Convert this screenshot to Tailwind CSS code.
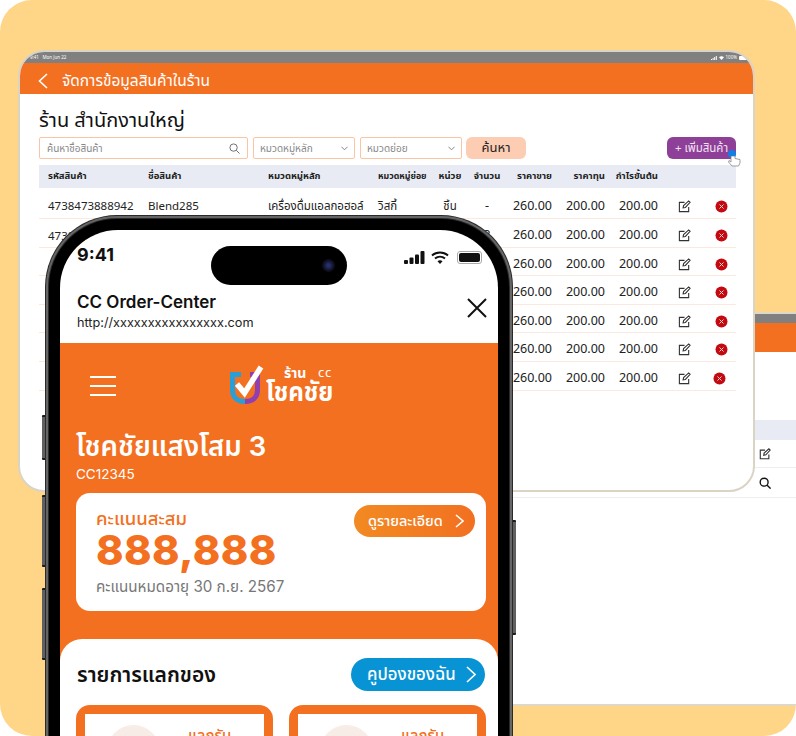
<!DOCTYPE html>
<html lang="th">
<head>
<meta charset="utf-8">
<script src="https://cdn.jsdelivr.net/npm/@tailwindcss/browser@4"></script>
</head>
<body class="bg-white">
<div class="relative w-[796px] h-[736px] overflow-hidden rounded-[32px] bg-[#ffd587] font-['Noto_Sans','Noto_Sans_Thai','Noto_Sans_Thai_Looped',sans-serif] text-[#222]">

  <!-- rear tablet -->
  <div class="absolute left-[440px] top-[312px] w-[420px] h-[394px] border-y-2 border-[#e0d8c6] bg-white flex flex-col">
    <div class="h-[9px] bg-[#808080]"></div>
    <div class="h-[29px] bg-[#f37021]"></div>
    <div class="mt-[68px] h-[20px] bg-[#e8ebf3]"></div>
    <div class="h-[28px] border-b border-[#eee] pl-[319px] flex items-center">
      <svg class="w-[12px] h-[12px]" viewBox="0 0 14 14" fill="none" stroke="#333" stroke-width="1.3"><path d="M11.5 7.5V12.5H1.5V2.5H7"/><path d="M5.5 8.5L6 6L11.5 1L13 2.5L8 8Z"/></svg>
    </div>
    <div class="h-[30px] border-b border-[#eee] pl-[319px] flex items-center">
      <svg class="w-[12px] h-[12px]" viewBox="0 0 14 14" fill="none" stroke="#111" stroke-width="1.6"><circle cx="6" cy="6" r="4.6"/><path d="M9.5 9.5L13.5 13.5"/></svg>
    </div>
  </div>

  <!-- front tablet -->
  <div class="absolute left-[18px] top-[50px] w-[737px] h-[442px] rounded-[26px] border-2 border-[#dad4c5] bg-white overflow-hidden flex flex-col">
    <div class="h-[11px] shrink-0 bg-[#808080] flex items-center justify-between pl-[10px] pr-[5px] text-[4.5px] text-white">
      <span>9:41 &nbsp; Mon Jun 22</span>
      <div class="flex items-center gap-[2px]">
        <svg class="w-[6px] h-[4px]" viewBox="0 0 6 4" fill="white"><rect y="3" width="1" height="1"/><rect x="1.600" y="2" width="1" height="2"/><rect x="3.200" y="1" width="1" height="3"/><rect x="4.800" width="1" height="4"/></svg>
        <svg class="w-[5px] h-[4px]" viewBox="0 0 5 4" fill="white"><path d="M0 1.300C1.500 0 3.500 0 5 1.300L2.500 4Z"/></svg>
        <span>100%</span>
        <div class="w-[9px] h-[4px] rounded-[1px] bg-white"></div>
      </div>
    </div>
    <div class="h-[31px] shrink-0 bg-[#f37021] flex items-center text-white pt-[4px]">
      <svg class="ml-[18px] w-[10px] h-[16px]" viewBox="0 0 10 16" fill="none" stroke="white" stroke-width="1.6"><path d="M9 1L1.5 8L9 15"/></svg>
      <span class="ml-[14px] text-[15.5px] leading-none">จัดการข้อมูลสินค้าในร้าน</span>
    </div>
    <div class="pl-[19px] pr-[17px] flex flex-col">
      <div class="mt-[10px] h-[32px] flex items-center text-[20px] text-[#111]">ร้าน สำนักงานใหญ่</div>
      <div class="mt-[1px] flex items-center h-[22px] text-[10px] text-[#888]">
        <div class="w-[209px] h-full rounded-[2px] border border-[#fbc4a4] flex items-center justify-between px-[7px]">
          <span>ค้นหาชื่อสินค้า</span>
          <svg class="w-[11px] h-[11px]" viewBox="0 0 12 12" fill="none" stroke="#666" stroke-width="1"><circle cx="5" cy="5" r="4"/><path d="M8 8L11.5 11.5"/></svg>
        </div>
        <div class="ml-[5px] w-[102px] h-full rounded-[2px] border border-[#fbc4a4] flex items-center justify-between px-[6px]">
          <span>หมวดหมู่หลัก</span>
          <svg class="w-[7px] h-[5px]" viewBox="0 0 8 5" fill="none" stroke="#777"><path d="M.5.5L4 4L7.5.5"/></svg>
        </div>
        <div class="ml-[5px] w-[102px] h-full rounded-[2px] border border-[#fbc4a4] flex items-center justify-between px-[6px]">
          <span>หมวดย่อย</span>
          <svg class="w-[7px] h-[5px]" viewBox="0 0 8 5" fill="none" stroke="#777"><path d="M.5.5L4 4L7.5.5"/></svg>
        </div>
        <div class="ml-[4px] w-[60px] h-full rounded-[6px] bg-[#fccdb3] flex items-center justify-center text-[13px] text-[#222]">ค้นหา</div>
        <div class="relative ml-[141px] w-[69px] h-full rounded-[6px] bg-[#8e4098] flex items-center justify-center text-[11.5px] text-[#f3e3f5]">
          + เพิ่มสินค้า
          <svg class="absolute left-[60px] top-[13px] w-[14px] h-[17px]" viewBox="0 0 14 17"><circle cx="5" cy="4" r="4" fill="#0d7fe8"/><path d="M4 6V12L2 10.5L1.5 12L5 16H11.5L13 13V9.5L8 8.5V6Z" fill="white" stroke="#777" stroke-width=".7"/></svg>
        </div>
      </div>

      <div class="mt-[6px] h-[23px] bg-[#e8ebf3] grid grid-cols-[109px_120px_110px_58px_28px_46px_42px_53px_53px_52px_22px] items-center text-[9.5px] font-bold text-[#222]">
        <span class="pl-[9px]">รหัสสินค้า</span><span>ชื่อสินค้า</span><span>หมวดหมู่หลัก</span><span class="text-[8.800px]">หมวดหมู่ย่อย</span><span class="text-center">หน่วย</span><span class="text-center">จำนวน</span><span class="text-right whitespace-nowrap">ราคาขาย</span><span class="text-right">ราคาทุน</span><span class="text-right whitespace-nowrap">กำไรขั้นต้น</span><span></span><span></span>
      </div>

      <div class="h-[31px] pt-[6px] border-b border-[#fbe9df] grid grid-cols-[109px_120px_110px_58px_28px_46px_42px_53px_53px_52px_22px] items-center text-[12.5px]">
        <span class="pl-[9px] text-[11.5px]">4738473888942</span><span class="text-[11.5px]">Blend285</span><span class="text-[11.5px] whitespace-nowrap">เครื่องดื่มแอลกอฮอล์</span><span class="text-[11.5px]">วิสกี้</span><span class="text-center text-[11.5px]">ชิ้น</span><span class="text-center">-</span><span class="text-right">260.00</span><span class="text-right">200.00</span><span class="text-right">200.00</span>
        <svg class="justify-self-center w-[13px] h-[13px]" viewBox="0 0 14 14" fill="none" stroke="#333" stroke-width="1.2"><path d="M11.5 7.5V12.5H1.5V2.5H7"/><path d="M5.5 8.5L6 6L11.5 1L13 2.5L8 8Z"/></svg>
        <svg class="justify-self-center w-[13px] h-[13px]" viewBox="0 0 13 13"><circle cx="6.5" cy="6.5" r="6" fill="#c20a10"/><path d="M4.5 4.5L8.5 8.5M8.5 4.5L4.5 8.5" stroke="#f8d0d0"/></svg>
      </div>
      <div class="h-[28.5px] pt-[6px] border-b border-[#fbe9df] grid grid-cols-[109px_120px_110px_58px_28px_46px_42px_53px_53px_52px_22px] items-center text-[12.5px]">
        <span class="pl-[9px] text-[11.5px]">4738473888942</span><span></span><span></span><span></span><span></span><span class="text-center">3</span><span class="text-right">260.00</span><span class="text-right">200.00</span><span class="text-right">200.00</span>
        <svg class="justify-self-center w-[13px] h-[13px]" viewBox="0 0 14 14" fill="none" stroke="#333" stroke-width="1.2"><path d="M11.5 7.5V12.5H1.5V2.5H7"/><path d="M5.5 8.5L6 6L11.5 1L13 2.5L8 8Z"/></svg>
        <svg class="justify-self-center w-[13px] h-[13px]" viewBox="0 0 13 13"><circle cx="6.5" cy="6.5" r="6" fill="#c20a10"/><path d="M4.5 4.5L8.5 8.5M8.5 4.5L4.5 8.5" stroke="#f8d0d0"/></svg>
      </div>
      <div class="h-[28.5px] pt-[6px] border-b border-[#fbe9df] grid grid-cols-[109px_120px_110px_58px_28px_46px_42px_53px_53px_52px_22px] items-center text-[12.5px]">
        <span class="pl-[9px] text-[11.5px]">4738473888942</span><span></span><span></span><span></span><span></span><span></span><span class="text-right">260.00</span><span class="text-right">200.00</span><span class="text-right">200.00</span>
        <svg class="justify-self-center w-[13px] h-[13px]" viewBox="0 0 14 14" fill="none" stroke="#333" stroke-width="1.2"><path d="M11.5 7.5V12.5H1.5V2.5H7"/><path d="M5.5 8.5L6 6L11.5 1L13 2.5L8 8Z"/></svg>
        <svg class="justify-self-center w-[13px] h-[13px]" viewBox="0 0 13 13"><circle cx="6.5" cy="6.5" r="6" fill="#c20a10"/><path d="M4.5 4.5L8.5 8.5M8.5 4.5L4.5 8.5" stroke="#f8d0d0"/></svg>
      </div>
      <div class="h-[28.5px] pt-[6px] border-b border-[#fbe9df] grid grid-cols-[109px_120px_110px_58px_28px_46px_42px_53px_53px_52px_22px] items-center text-[12.5px]">
        <span></span><span></span><span></span><span></span><span></span><span></span><span class="text-right">260.00</span><span class="text-right">200.00</span><span class="text-right">200.00</span>
        <svg class="justify-self-center w-[13px] h-[13px]" viewBox="0 0 14 14" fill="none" stroke="#333" stroke-width="1.2"><path d="M11.5 7.5V12.5H1.5V2.5H7"/><path d="M5.5 8.5L6 6L11.5 1L13 2.5L8 8Z"/></svg>
        <svg class="justify-self-center w-[13px] h-[13px]" viewBox="0 0 13 13"><circle cx="6.5" cy="6.5" r="6" fill="#c20a10"/><path d="M4.5 4.5L8.5 8.5M8.5 4.5L4.5 8.5" stroke="#f8d0d0"/></svg>
      </div>
      <div class="h-[28.5px] pt-[6px] border-b border-[#fbe9df] grid grid-cols-[109px_120px_110px_58px_28px_46px_42px_53px_53px_52px_22px] items-center text-[12.5px]">
        <span></span><span></span><span></span><span></span><span></span><span></span><span class="text-right">260.00</span><span class="text-right">200.00</span><span class="text-right">200.00</span>
        <svg class="justify-self-center w-[13px] h-[13px]" viewBox="0 0 14 14" fill="none" stroke="#333" stroke-width="1.2"><path d="M11.5 7.5V12.5H1.5V2.5H7"/><path d="M5.5 8.5L6 6L11.5 1L13 2.5L8 8Z"/></svg>
        <svg class="justify-self-center w-[13px] h-[13px]" viewBox="0 0 13 13"><circle cx="6.5" cy="6.5" r="6" fill="#c20a10"/><path d="M4.5 4.5L8.5 8.5M8.5 4.5L4.5 8.5" stroke="#f8d0d0"/></svg>
      </div>
      <div class="h-[28.5px] pt-[6px] border-b border-[#fbe9df] grid grid-cols-[109px_120px_110px_58px_28px_46px_42px_53px_53px_52px_22px] items-center text-[12.5px]">
        <span></span><span></span><span></span><span></span><span></span><span></span><span class="text-right">260.00</span><span class="text-right">200.00</span><span class="text-right">200.00</span>
        <svg class="justify-self-center w-[13px] h-[13px]" viewBox="0 0 14 14" fill="none" stroke="#333" stroke-width="1.2"><path d="M11.5 7.5V12.5H1.5V2.5H7"/><path d="M5.5 8.5L6 6L11.5 1L13 2.5L8 8Z"/></svg>
        <svg class="justify-self-center w-[13px] h-[13px]" viewBox="0 0 13 13"><circle cx="6.5" cy="6.5" r="6" fill="#c20a10"/><path d="M4.5 4.5L8.5 8.5M8.5 4.5L4.5 8.5" stroke="#f8d0d0"/></svg>
      </div>
      <div class="h-[29px] pt-[5px] border-b border-[#fbe9df] grid grid-cols-[109px_120px_110px_58px_28px_46px_42px_53px_53px_52px_22px] items-center text-[12.5px]">
        <span></span><span></span><span></span><span></span><span></span><span></span><span class="text-right">260.00</span><span class="text-right">200.00</span><span class="text-right">200.00</span>
        <svg class="justify-self-center w-[13px] h-[13px]" viewBox="0 0 14 14" fill="none" stroke="#333" stroke-width="1.2"><path d="M11.5 7.5V12.5H1.5V2.5H7"/><path d="M5.5 8.5L6 6L11.5 1L13 2.5L8 8Z"/></svg>
        <svg class="justify-self-center w-[13px] h-[13px] -translate-x-[2px]" viewBox="0 0 13 13"><circle cx="6.5" cy="6.5" r="6" fill="#c20a10"/><path d="M4.5 4.5L8.5 8.5M8.5 4.5L4.5 8.5" stroke="#f8d0d0"/></svg>
      </div>
    </div>
  </div>

  <!-- phone side buttons -->
  <div class="absolute left-[42px] top-[415px] w-[4px] h-[45px] rounded-l-[1px] border-y-2 border-[#1c1c1c] bg-[#606060]"></div>
  <div class="absolute left-[42px] top-[495px] w-[4px] h-[72px] rounded-l-[1px] border-y-2 border-[#1c1c1c] bg-[#606060]"></div>
  <div class="absolute left-[42px] top-[588px] w-[4px] h-[72px] rounded-l-[1px] border-y-2 border-[#1c1c1c] bg-[#606060]"></div>
  <div class="absolute left-[512px] top-[520px] w-[4px] h-[115px] rounded-r-[1px] border-y-2 border-[#1c1c1c] bg-[#606060]"></div>

  <!-- phone -->
  <div class="absolute left-[45px] top-[215px] w-[468px] h-[640px] rounded-[72px] bg-[#2a2a2a] p-[1px]">
    <div class="h-full rounded-[71px] bg-[#666] p-[2px]">
      <div class="h-full rounded-[69px] bg-[#2a2a2a] p-[1px]">
        <div class="h-full rounded-[68px] bg-black p-[11px]">
      <div class="relative h-full rounded-[58px] bg-white overflow-hidden flex flex-col font-['Inter','Noto_Sans_Thai',sans-serif]">
        <!-- status bar -->
        <div class="h-[50px] shrink-0 flex items-end justify-between pl-[17px] pr-[16px] pb-[8px]">
          <span class="text-[18px] font-bold leading-[34px] text-[#111]">9:41</span>
          <div class="flex items-center pb-[8px]">
            <svg class="w-[21px] h-[13px]" viewBox="0 0 21 13" fill="#111"><rect x="0" y="9" width="4" height="4" rx="1"/><rect x="5.5" y="6.5" width="4" height="6.5" rx="1"/><rect x="11" y="3.5" width="4" height="9.5" rx="1"/><rect x="16.5" y="0" width="4" height="13" rx="1"/></svg>
            <svg class="ml-[6px] w-[18px] h-[13px]" viewBox="0 0 18 13" fill="none" stroke="#111" stroke-width="2"><path d="M1 4.5C5.5 .5 12.5 .5 17 4.5"/><path d="M4 7.6C7 5 11 5 14 7.6"/><path d="M9 13L6.5 10.3C8 9 10 9 11.5 10.3Z" fill="#111" stroke="none"/></svg>
            <div class="ml-[8px] w-[25px] h-[13px] rounded-[3px] border border-[#aaa] p-[1px]"><div class="h-full rounded-[2px] bg-[#111]"></div></div>
          </div>
        </div>
        <!-- island -->
        <div class="absolute left-[151px] top-[16px] w-[136px] h-[39px] rounded-full bg-black">
          <div class="absolute left-[111px] top-[13px] w-[13px] h-[13px] rounded-full bg-[radial-gradient(circle,#25306a_15%,#0d0d1c_60%)]"></div>
        </div>
        <!-- browser header -->
        <div class="h-[63px] shrink-0 flex items-start justify-between pl-[17px] pr-[11px] pt-[10px]">
          <div class="flex flex-col">
            <span class="text-[17px] font-semibold leading-[24px] text-[#111]">CC Order-Center</span>
            <span class="text-[12.7px] leading-[17px] text-[#222]">http://xxxxxxxxxxxxxxxx.com</span>
          </div>
          <svg class="mt-[8px] w-[20px] h-[20px]" viewBox="0 0 20 20" stroke="#111" stroke-width="2"><path d="M1 1L19 19M19 1L1 19"/></svg>
        </div>
        <!-- orange area -->
        <div class="flex-1 bg-[#f37021] flex flex-col">
          <div class="h-[78px] relative flex items-center pl-[30px] pt-[8px]">
            <div class="flex flex-col gap-[7px]">
              <div class="w-[26px] h-[2px] bg-white"></div>
              <div class="w-[26px] h-[2px] bg-white"></div>
              <div class="w-[26px] h-[2px] bg-white"></div>
            </div>
            <svg class="absolute left-[168px] top-[20px] w-[36px] h-[44px]" viewBox="0 0 36 44" fill="none">
              <path d="M17 38.500C9 38.500 4.500 34 4.500 27V11.500H13" stroke="#2a9fd6" stroke-width="5"/>
              <path d="M17 38.500C25 38.500 29.500 34 29.500 27V11.500H22" stroke="#8f3fb0" stroke-width="5"/>
              <path d="M9 21L16.500 30L33 4" stroke="white" stroke-width="5.500"/>
            </svg>
            <div class="absolute left-[206px] top-[22px] w-[70px] h-[40px] text-white font-['Noto_Sans','Noto_Sans_Thai',sans-serif]">
              <span class="absolute left-[18px] top-[-1px] text-[14px] font-bold leading-[18px]">ร้าน</span>
              <span class="absolute left-[52px] top-[1px] text-[13px] font-normal leading-none tracking-[.05em]">cc</span>
              <span class="absolute left-0 top-[8px] text-[26px] font-bold leading-[36px] whitespace-nowrap origin-left scale-x-[.93]">โชคชัย</span>
            </div>
          </div>
          <div class="pl-[16px] text-white text-[27.500px] font-semibold leading-[34px] mt-[8px]">โชคชัยแสงโสม 3</div>
          <div class="pl-[16px] text-white text-[13.500px] leading-[18px] mt-[2px]">CC12345</div>
          <div class="ml-[16px] mt-[10px] w-[410px] h-[118px] rounded-[14px] bg-white relative pl-[20px] pt-[13px] flex flex-col">
            <span class="text-[18.500px] leading-[24px] text-[#f37021] font-medium">คะแนนสะสม</span>
            <span class="text-[41.500px] leading-[40px] font-extrabold text-[#f37021] tracking-[.01em]">888,888</span>
            <span class="mt-[6px] text-[15.200px] leading-[22px] text-[#777]">คะแนนหมดอายุ 30 ก.ย. 2567</span>
            <div class="absolute right-[11px] top-[12px] w-[121px] h-[32px] rounded-full bg-gradient-to-r from-[#f28a22] to-[#f27021] flex items-center justify-between pl-[14px] pr-[11px] text-white text-[14.500px] font-medium">
              <span>ดูรายละเอียด</span>
              <svg class="w-[9px] h-[14px]" viewBox="0 0 9 14" fill="none" stroke="white" stroke-width="1.6"><path d="M1 1L8 7L1 13"/></svg>
            </div>
          </div>
          <div class="mt-[28px] flex-1 rounded-t-[22px] bg-white pl-[16px] pr-[12px] pt-[19px]">
            <div class="flex items-center justify-between h-[33px] pl-[1px] pr-[1px]">
              <span class="text-[21px] font-semibold text-[#111]">รายการแลกของ</span>
              <div class="w-[134px] h-[33px] rounded-full bg-[#0894d4] flex items-center justify-between pl-[16px] pr-[9px] text-white text-[16.800px] font-medium">
                <span>คูปองของฉัน</span>
                <svg class="w-[10px] h-[17px]" viewBox="0 0 10 17" fill="none" stroke="white" stroke-width="1.6"><path d="M1 1L9 8.500L1 16"/></svg>
              </div>
            </div>
            <div class="mt-[14px] grid grid-cols-2 gap-[16px]">
              <div class="h-[120px] rounded-[14px] bg-[#f37021] p-[9px]">
                <div class="h-full bg-white flex items-start pl-[22px] pt-[11px] gap-[28px]">
                  <div class="w-[53px] h-[53px] rounded-full bg-[#f7ece6]"></div>
                  <span class="mt-[1px] text-[15px] font-medium leading-[20px] text-[#f37021] whitespace-nowrap">แลกรับ</span>
                </div>
              </div>
              <div class="h-[120px] rounded-[14px] bg-[#f37021] p-[9px]">
                <div class="h-full bg-white flex items-start pl-[22px] pt-[11px] gap-[28px]">
                  <div class="w-[53px] h-[53px] rounded-full bg-[#f7ece6]"></div>
                  <span class="mt-[1px] text-[15px] font-medium leading-[20px] text-[#f37021] whitespace-nowrap">แลกรับ</span>
                </div>
              </div>
            </div>
          </div>
        </div>
      </div>
        </div>
      </div>
    </div>
  </div>
</div>
</body>
</html>
